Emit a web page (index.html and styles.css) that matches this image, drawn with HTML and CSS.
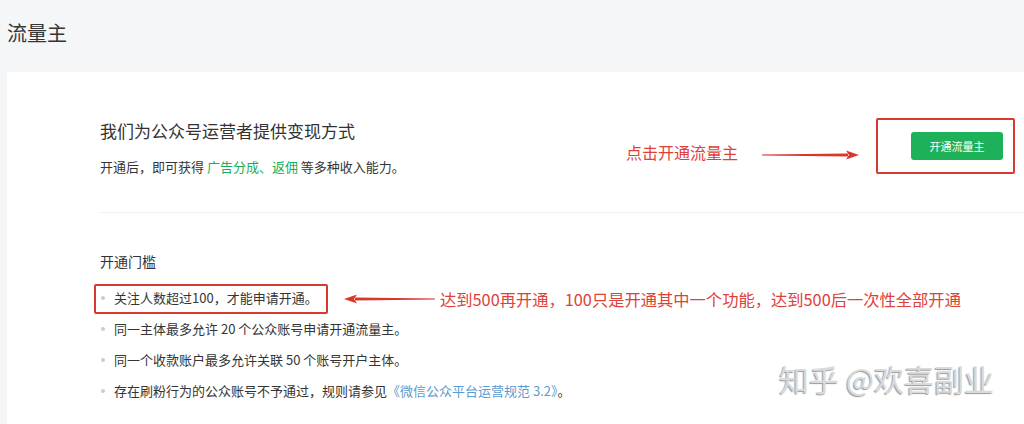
FILE: index.html
```html
<!DOCTYPE html>
<html lang="zh">
<head>
<meta charset="utf-8">
<link rel="stylesheet" href="styles.css">
</head>
<body>
<header class="page-title">流量主</header>
<main class="card">
  <section class="intro">
    <div class="intro-text">
      <h2 class="intro-head">我们为公众号运营者提供变现方式</h2>
      <p class="intro-sub">开通后，即可获得 <span class="green">广告分成、返佣</span> 等多种收入能力。</p>
    </div>
    <button class="open-btn">开通流量主</button>
  </section>
  <hr class="divider">
  <section class="rules">
    <h3 class="rules-head">开通门槛</h3>
    <ul class="rule-list">
      <li>关注人数超过100，才能申请开通。</li>
      <li>同一主体最多允许 20 个公众账号申请开通流量主。</li>
      <li>同一个收款账户最多允许关联 50 个账号开户主体。</li>
      <li>存在刷粉行为的公众账号不予通过，规则请参见<span class="link">《微信公众平台运营规范 3.2》</span>。</li>
    </ul>
  </section>
</main>

<div class="mark box-btn"></div>
<div class="mark box-rule"></div>
<div class="note note-1">点击开通流量主</div>
<div class="note note-2">达到500再开通，100只是开通其中一个功能，达到500后一次性全部开通</div>
<svg class="arrow arrow-1" width="100" height="12" viewBox="0 0 100 12">
  <polygon points="0,5.5 86,4.6 86,7.4 0,6.5" fill="#d9362e"/>
  <polygon points="84,1.5 97,6 84,10.5 87,6" fill="#d9362e"/>
</svg>
<svg class="arrow arrow-2" width="92" height="12" viewBox="0 0 92 12">
  <polygon points="92,5.6 12,4.4 12,7.6 92,6.4" fill="#d9362e"/>
  <polygon points="14,1.5 1,6 14,10.5 11,6" fill="#d9362e"/>
</svg>
<div class="watermark">知乎 @欢喜副业</div>
</body>
</html>
```
FILE: styles.css
```css
* { box-sizing: border-box; }
html, body { margin: 0; padding: 0; }
body {
  background: #f5f6f8;
  font-family: "Noto Sans CJK SC", "Liberation Sans", sans-serif;
  color: #353535;
  width: 1024px;
  height: 424px;
  overflow: hidden;
  position: relative;
}
.page-title {
  padding: 19px 7px 25px;
  font-size: 20px;
  line-height: 28px;
  color: #353535;
}
.card {
  margin-left: 7px;
  background: #fff;
  padding: 47px 0 0 93px;
  height: 352px;
}
.intro {
  display: flex;
  align-items: center;
  justify-content: space-between;
  padding-right: 21px;
}
.intro-head {
  margin: 0;
  font-size: 17px;
  line-height: 24px;
  font-weight: normal;
  color: #333;
}
.intro-sub {
  margin: 14px 0 0;
  font-size: 13px;
  line-height: 20px;
  color: #353535;
}
.green { color: #1aad5a; }
.open-btn {
  width: 92px;
  height: 28px;
  border: none;
  border-radius: 3px;
  background: #1db15a;
  color: #fff;
  font-family: inherit;
  font-size: 11px;
  padding: 0;
  margin-top: -4px;
}
.divider {
  border: none;
  border-top: 1px solid #f0f0f0;
  margin: 35px 0 0;
}
.rules-head {
  margin: 38px 0 0;
  font-size: 14px;
  line-height: 20px;
  font-weight: normal;
  color: #333;
}
.rule-list {
  list-style: none;
  margin: 17px 0 0;
  padding: 0;
}
.rule-list li {
  font-size: 13px;
  line-height: 20px;
  color: #353535;
  padding-left: 14px;
  position: relative;
  margin-bottom: 11px;
}
.rule-list li::before {
  content: "";
  position: absolute;
  left: 1px;
  top: 8px;
  width: 4px;
  height: 4px;
  border-radius: 50%;
  background: #ccc;
}
.link { color: #5b9bd1; }

.mark {
  position: absolute;
  border: 2px solid #d63a33;
  border-radius: 2px;
}
.box-btn { left: 876px; top: 118px; width: 139px; height: 56px; }
.box-rule { left: 94px; top: 284px; width: 234px; height: 30px; }
.note {
  position: absolute;
  color: #e0403a;
  font-size: 16px;
  line-height: 20px;
  white-space: nowrap;
}
.note-1 { left: 626px; top: 142px; }
.note-2 { left: 440px; top: 289px; font-size: 16.3px; }
.arrow { position: absolute; }
.arrow-1 { left: 762px; top: 149px; }
.arrow-2 { left: 343px; top: 293px; }
.watermark {
  position: absolute;
  left: 779px;
  top: 358px;
  font-size: 30px;
  line-height: 40px;
  color: #dadada;
  text-shadow: -1px 1px 1px #9a9a9a;
  white-space: nowrap;
}
```
